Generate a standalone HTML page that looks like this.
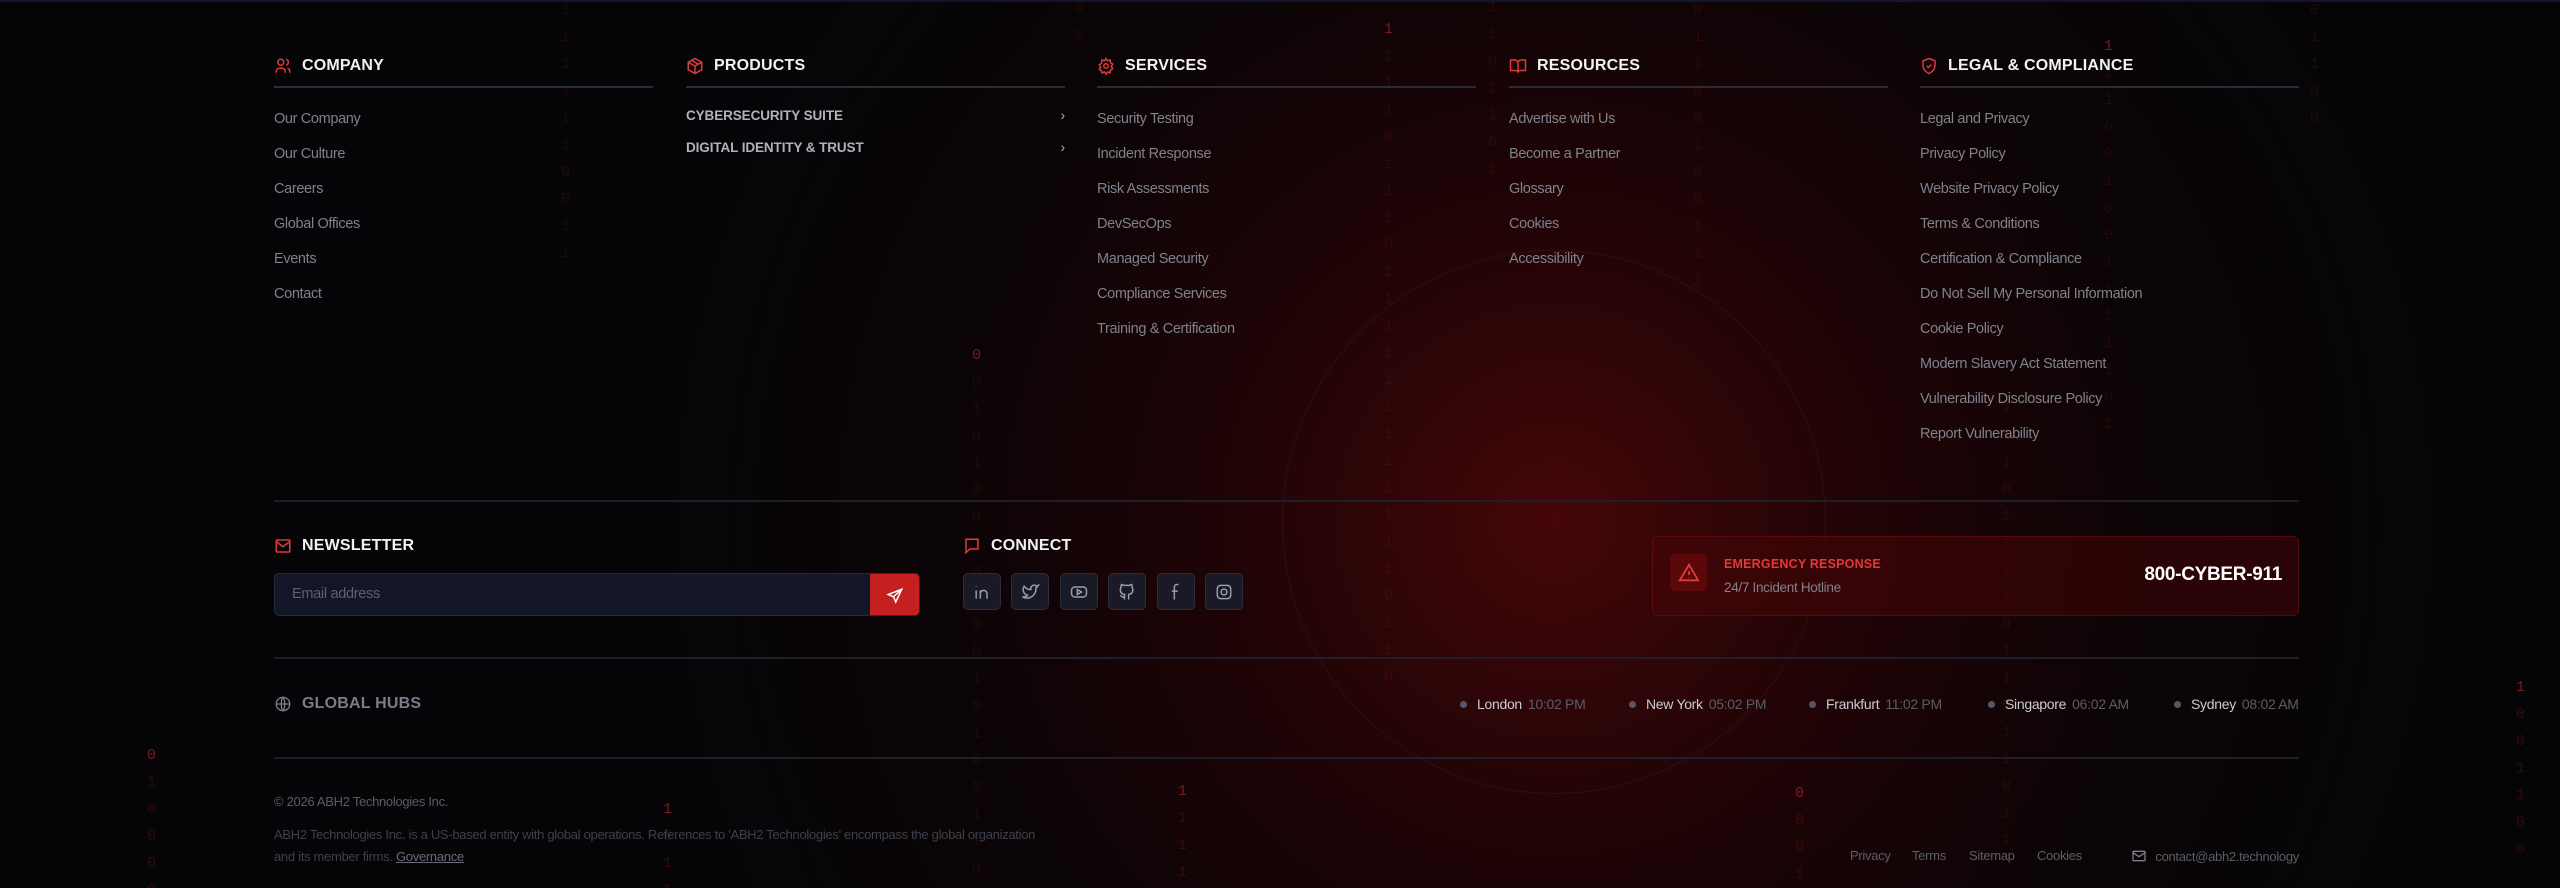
<!DOCTYPE html>
<html><head><meta charset="utf-8">
<style>
*{margin:0;padding:0;box-sizing:border-box}
html,body{width:2560px;height:888px;overflow:hidden;background:#050507}
body{position:relative;font-family:"Liberation Sans",sans-serif;color:#8b8e98}
.bg{position:absolute;inset:0;background:radial-gradient(circle at 1554px 522px,rgba(90,6,8,0.75) 0,rgba(60,4,6,0.55) 280px,rgba(25,2,3,0.3) 600px,rgba(5,5,7,0) 900px)}
.topline{position:absolute;left:0;right:0;top:0;height:2px;background:#14142a}
.circ{position:absolute;left:1282px;top:250px;width:544px;height:544px;border-radius:50%;border:1px solid rgba(140,30,30,0.22)}
.bin{position:absolute;font-family:"Liberation Mono",monospace;font-size:15px;line-height:27px;color:rgba(150,25,25,0.2);white-space:pre;width:12px}
.bin.b{color:rgba(200,40,40,0.6)}
.col{position:absolute;top:55px;width:379px}
.h{display:flex;align-items:center;height:22px;font-weight:bold;font-size:16px;color:#f2f2f4;letter-spacing:0.2px}
.h svg{margin-right:10px}
.rule{height:2px;background:#2a2b36;margin-top:9px}
.col ul{list-style:none;margin-top:21px}
.col li{font-size:14.5px;letter-spacing:-0.35px;height:35px;line-height:20px;color:#7f828c}
.prod li{font-weight:bold;font-size:13.5px;letter-spacing:-0.1px;color:#b0b3bd;display:flex;justify-content:space-between;height:35px;margin-top:-3px}
.hr{position:absolute;left:274px;width:2025px;height:2px;background:#1e1f2c}
.input{position:absolute;left:274px;top:573px;width:646px;height:43px;border:1px solid #262b3c;border-radius:5px;background:#121626;overflow:hidden}
.input span{position:absolute;left:17px;top:12px;font-size:14.5px;letter-spacing:-0.3px;color:#5c6170}
.input .btn{position:absolute;right:0;top:0;width:49px;height:43px;background:#c3201f;display:flex;align-items:center;justify-content:center}
.soc{position:absolute;top:573px;width:38px;height:37px;border:1px solid #2d2e3c;border-radius:5px;background:#1a1a26;display:flex;align-items:center;justify-content:center}
.em{position:absolute;left:1652px;top:536px;width:647px;height:80px;border:1px solid rgba(120,20,20,0.5);border-radius:6px;background:rgba(70,5,8,0.55)}
.hub{position:absolute;top:696px;font-size:14px;letter-spacing:-0.3px;color:#c9cbd2;display:flex;align-items:center}
.hub i{display:inline-block;width:7px;height:7px;border-radius:50%;background:#54576a;margin-right:10px}
.hub b{font-weight:normal;color:#5a5d68;margin-left:6px}
.foot{position:absolute;font-size:13px;letter-spacing:-0.3px;color:#4f525d}
</style></head><body>
<div class="bg"></div>
<div class="topline"></div>
<div class="circ"></div>

<div class="bin" style="left:561px;top:-3px">1
1
1
1
1
1
0
0
1
1</div>
<div class="bin b" style="left:972px;top:342px">0
<span style="color:rgba(150,25,25,.2)">0
1
0
1
0
0
1
0
0
0
0
1
0
1
0
0
1
1
0</span></div>
<div class="bin" style="left:1075px;top:-5px">0
0</div>
<div class="bin b" style="left:1384px;top:16px">1<span style="color:rgba(150,25,25,.2)">
1
1
1
0
1
1
1
0
1
1
1
1
1
1
1
1
1
1
1
1
0
1
1
0</span></div>
<div class="bin" style="left:1488px;top:-6px">1
1
0
1
1
0
1</div>
<div class="bin" style="left:1693px;top:-3px">0
1
1
0
0
1
0
0
1
1
1</div>
<div class="bin b" style="left:1795px;top:780px">0
<span style="color:rgba(150,25,25,.28)">0
0
1</span></div>
<div class="bin" style="left:1898px;top:-15px">1</div>
<div class="bin" style="left:2002px;top:395px">1
1
1
0
1
1
1
1
0
1
1
0
1
1
0
1
1</div>
<div class="bin b" style="left:2104px;top:33px">1<span style="color:rgba(150,25,25,.2)">
1
1
0
0
1
0
0
1
1
1
1
1
0
1</span></div>
<div class="bin" style="left:2310px;top:-3px">0
1
1
0
0</div>
<div class="bin b" style="left:2516px;top:674px">1<span style="color:rgba(150,25,25,.3)">
0
0
1
1
0
0</span></div>
<div class="bin b" style="left:147px;top:742px">0<span style="color:rgba(150,25,25,.3)">
1
0
0
0
0</span></div>
<div class="bin b" style="left:663px;top:796px">1<span style="color:rgba(150,25,25,.3)">
0
1
1</span></div>
<div class="bin b" style="left:1178px;top:778px">1<span style="color:rgba(150,25,25,.3)">
1
1
1</span></div>

<div class="col" style="left:274px">
 <div class="h"><svg width="18" height="18" viewBox="0 0 24 24" fill="none" stroke="#e03a3a" stroke-width="2"><circle cx="9" cy="7" r="4"/><path d="M3 21v-2a4 4 0 0 1 4-4h4a4 4 0 0 1 4 4v2M16 3.1a4 4 0 0 1 0 7.8M21 21v-2a4 4 0 0 0-3-3.9"/></svg>COMPANY</div>
 <div class="rule"></div>
 <ul><li>Our Company</li><li>Our Culture</li><li>Careers</li><li>Global Offices</li><li>Events</li><li>Contact</li></ul>
</div>
<div class="col prod" style="left:686px">
 <div class="h"><svg width="18" height="18" viewBox="0 0 24 24" fill="none" stroke="#e03a3a" stroke-width="2"><path d="M12 2l9 5v10l-9 5-9-5V7z M3 7l9 5 9-5 M12 12v10 M7.5 4.5l9 5"/></svg>PRODUCTS</div>
 <div class="rule"></div>
 <ul><li>CYBERSECURITY SUITE<span style="font-weight:normal">›</span></li><li>DIGITAL IDENTITY &amp; TRUST<span style="font-weight:normal">›</span></li></ul>
</div>
<div class="col" style="left:1097px">
 <div class="h"><svg width="18" height="18" viewBox="0 0 24 24" fill="none" stroke="#e03a3a" stroke-width="2"><circle cx="12" cy="12" r="3"/><path d="M12 2l2 3 3.5-1 .5 3.5 3 2-2 3 2 3-3 2-.5 3.5-3.5-1-2 3-2-3-3.5 1L6 18.5l-3-2 2-3-2-3 3-2L6.5 4 10 5z"/></svg>SERVICES</div>
 <div class="rule"></div>
 <ul><li>Security Testing</li><li>Incident Response</li><li>Risk Assessments</li><li>DevSecOps</li><li>Managed Security</li><li>Compliance Services</li><li>Training &amp; Certification</li></ul>
</div>
<div class="col" style="left:1509px">
 <div class="h"><svg width="18" height="18" viewBox="0 0 24 24" fill="none" stroke="#e03a3a" stroke-width="2"><path d="M2 4h6a4 4 0 0 1 4 4v13a3 3 0 0 0-3-3H2z M22 4h-6a4 4 0 0 0-4 4v13a3 3 0 0 1 3-3h7z"/></svg>RESOURCES</div>
 <div class="rule"></div>
 <ul><li>Advertise with Us</li><li>Become a Partner</li><li>Glossary</li><li>Cookies</li><li>Accessibility</li></ul>
</div>
<div class="col" style="left:1920px">
 <div class="h"><svg width="18" height="18" viewBox="0 0 24 24" fill="none" stroke="#e03a3a" stroke-width="2"><path d="M12 2l8 3v6c0 5-3.5 9-8 11-4.5-2-8-6-8-11V5z M9 12l2 2 4-4"/></svg>LEGAL &amp; COMPLIANCE</div>
 <div class="rule"></div>
 <ul><li>Legal and Privacy</li><li>Privacy Policy</li><li>Website Privacy Policy</li><li>Terms &amp; Conditions</li><li>Certification &amp; Compliance</li><li>Do Not Sell My Personal Information</li><li>Cookie Policy</li><li>Modern Slavery Act Statement</li><li>Vulnerability Disclosure Policy</li><li>Report Vulnerability</li></ul>
</div>

<div class="hr" style="top:500px"></div>

<div class="h" style="position:absolute;left:274px;top:535px"><svg width="18" height="18" viewBox="0 0 24 24" fill="none" stroke="#e03a3a" stroke-width="2"><rect x="3" y="4" width="18" height="16" rx="1"/><path d="M3 6l9 7 9-7"/></svg>NEWSLETTER</div>
<div class="input"><span>Email address</span><div class="btn"><svg width="18" height="18" viewBox="0 0 24 24" fill="none" stroke="#fff" stroke-width="2"><path d="M21 3L3 10l7 3 3 7z M10 13l11-10"/></svg></div></div>

<div class="h" style="position:absolute;left:963px;top:535px"><svg width="18" height="18" viewBox="0 0 24 24" fill="none" stroke="#e03a3a" stroke-width="2"><path d="M4 3h16v13H9l-5 5z"/></svg>CONNECT</div>
<div class="soc" style="left:963px"><svg width="20" height="20" viewBox="0 0 24 24" fill="none" stroke="#9a9cab" stroke-width="1.8"><path d="M5 10v10M5 5v.5M10 20v-6a4 4 0 0 1 8 0v6M10 10v10"/></svg></div>
<div class="soc" style="left:1011px"><svg width="20" height="20" viewBox="0 0 24 24" fill="none" stroke="#9a9cab" stroke-width="1.8"><path d="M22 4s-1 2-3 3c1 9-8 15-16 11 3 0 5-1 6-2C3 14 3 8 5 5c2 3 5 4 8 4-1-4 4-7 7-4z"/></svg></div>
<div class="soc" style="left:1060px"><svg width="20" height="20" viewBox="0 0 24 24" fill="none" stroke="#9a9cab" stroke-width="1.8"><rect x="3" y="6" width="18" height="12" rx="4"/><path d="M10 9l5 3-5 3z"/></svg></div>
<div class="soc" style="left:1108px"><svg width="20" height="20" viewBox="0 0 24 24" fill="none" stroke="#9a9cab" stroke-width="1.8"><path d="M9 21v-4c0-1 .5-2 1-2-3 0-6-1-6-6 0-1 .5-2 1-3-.2-1 0-2 .3-3 1 0 2 .5 3 1.3a10 10 0 0 1 6 0C15.5 3.5 16.7 3 17.7 3c.3 1 .5 2 .3 3 .5 1 1 2 1 3 0 5-3 6-6 6 .5 0 1 1 1 2v4M9 18c-3 1-4-1-5-2"/></svg></div>
<div class="soc" style="left:1157px"><svg width="20" height="20" viewBox="0 0 24 24" fill="none" stroke="#9a9cab" stroke-width="1.8"><path d="M15 3h-2a3 3 0 0 0-3 3v15M7 11h7"/></svg></div>
<div class="soc" style="left:1205px"><svg width="20" height="20" viewBox="0 0 24 24" fill="none" stroke="#9a9cab" stroke-width="1.8"><rect x="4" y="4" width="16" height="16" rx="4"/><circle cx="12" cy="12" r="3.5"/><path d="M16.5 7.5v.1"/></svg></div>

<div class="em">
 <div style="position:absolute;left:17px;top:17px;width:37px;height:37px;border-radius:5px;background:rgba(110,10,14,0.6);display:flex;align-items:center;justify-content:center"><svg width="22" height="22" viewBox="0 0 24 24" fill="none" stroke="#e03a3a" stroke-width="2"><path d="M12 3L2 20h20z M12 10v4 M12 17v.5"/></svg></div>
 <div style="position:absolute;left:71px;top:20px;font-weight:bold;font-size:12.5px;color:#e03a3a;letter-spacing:0.2px">EMERGENCY RESPONSE</div>
 <div style="position:absolute;left:71px;top:43px;font-size:13.5px;letter-spacing:-0.3px;color:#7f828c">24/7 Incident Hotline</div>
 <div style="position:absolute;right:16px;top:27px;font-weight:bold;font-size:19px;letter-spacing:-0.3px;color:#fff">800-CYBER-911</div>
</div>

<div class="hr" style="top:657px"></div>
<div class="h" style="position:absolute;left:274px;top:693px;color:#7a7d8a"><svg width="18" height="18" viewBox="0 0 24 24" fill="none" stroke="#7a7d8a" stroke-width="1.8"><circle cx="12" cy="12" r="9"/><path d="M3 12h18M12 3c3 3 3 15 0 18M12 3c-3 3-3 15 0 18"/></svg>GLOBAL HUBS</div>
<div class="hub" style="left:1460px"><i></i>London<b>10:02 PM</b></div>
<div class="hub" style="left:1629px"><i></i>New York<b>05:02 PM</b></div>
<div class="hub" style="left:1809px"><i></i>Frankfurt<b>11:02 PM</b></div>
<div class="hub" style="left:1988px"><i></i>Singapore<b>06:02 AM</b></div>
<div class="hub" style="left:2174px"><i></i>Sydney<b>08:02 AM</b></div>
<div class="hr" style="top:757px"></div>

<div class="foot" style="left:274px;top:794px;color:#5a5d68">© 2026 ABH2 Technologies Inc.</div>
<div class="foot" style="left:274px;top:824px;width:765px;line-height:22px;color:#3e414b">ABH2 Technologies Inc. is a US-based entity with global operations. References to 'ABH2 Technologies' encompass the global organization and its member firms. <u style="color:#6a6d78">Governance</u></div>
<div class="foot" style="left:1850px;top:848px;color:#5a5d68">Privacy</div>
<div class="foot" style="left:1912px;top:848px;color:#5a5d68">Terms</div>
<div class="foot" style="left:1969px;top:848px;color:#5a5d68">Sitemap</div>
<div class="foot" style="left:2037px;top:848px;color:#5a5d68">Cookies</div>
<div class="foot" style="left:2118px;top:848px;width:181px;color:#5a5d68;display:flex;align-items:center;justify-content:flex-end"><svg width="16" height="16" viewBox="0 0 24 24" fill="none" stroke="#7a7d8a" stroke-width="2" style="margin-right:8px"><rect x="3" y="5" width="18" height="14" rx="1"/><path d="M3 7l9 6 9-6"/></svg>contact@abh2.technology</div>
</body></html>
